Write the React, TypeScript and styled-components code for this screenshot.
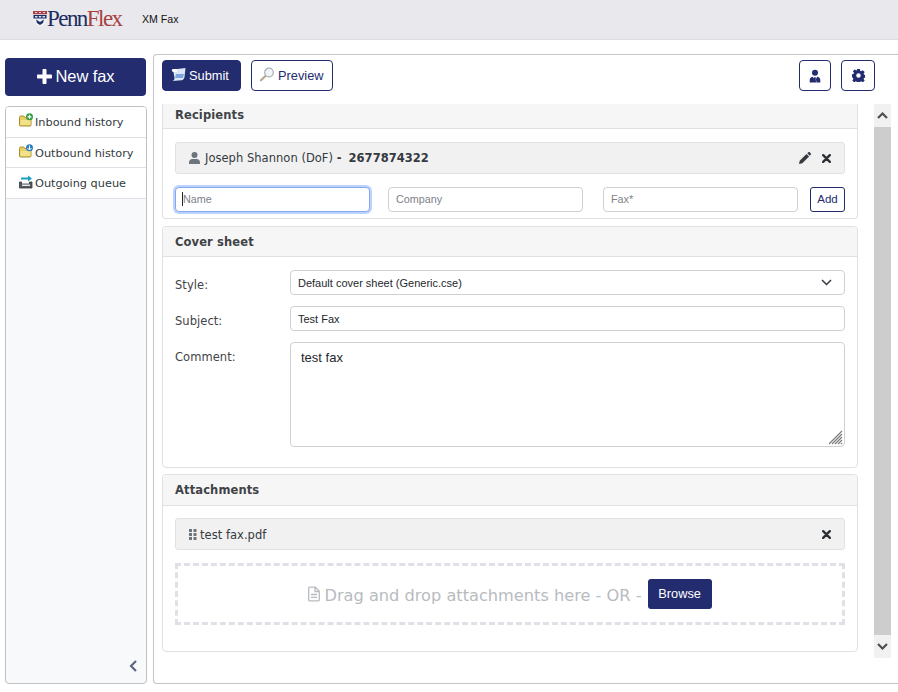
import React from "react";
import styled, { createGlobalStyle } from "styled-components";

const NAVY = "#232c6f";
const Global = createGlobalStyle`
  html, body { margin: 0; padding: 0; background: #fff; }
  #root { width: 898px; height: 692px; overflow: hidden; }
  * { box-sizing: border-box; }
`;
const Page = styled.div`
  width: 898px; height: 692px; display: flex; flex-direction: column;
  font-family: "DejaVu Sans", Verdana, sans-serif; color: #343a40; background: #fff;
`;
const Header = styled.header`
  height: 40px; flex: none; background: #e9e9ed; border-bottom: 1px solid #dedee2;
  display: flex; align-items: center; padding: 0 0 1px 33px;
`;
const Logo = styled.div`
  display: flex; align-items: center; width: 109px;
  font-family: "Liberation Serif", serif; font-size: 23px; letter-spacing: -1.55px; line-height: 22px;
`;
const Penn = styled.span`color: #1d2d63;`;
const Flex = styled.span`color: #a8413f;`;
const AppName = styled.div`
  font-family: "Liberation Sans", Arial, sans-serif; font-size: 10.6px; color: #111; margin-top: -1px;
`;
const Body = styled.div`
  flex: 1; display: grid; grid-template-columns: 142px 745px; column-gap: 6px;
  padding: 14px 0 8px 5px; min-height: 0; width: 898px;
`;
const Side = styled.aside`
  display: flex; flex-direction: column; padding-top: 4px; min-height: 0;
`;
const NewFax = styled.button`
  height: 38px; flex: none; width: 141px; border: none; border-radius: 4px; background: ${NAVY}; color: #fff;
  font-family: "Liberation Sans", Arial, sans-serif; font-size: 16.5px; letter-spacing: -.1px;
  display: flex; align-items: center; justify-content: center; gap: 4px; padding: 0 0 2px;
`;
const SideBox = styled.nav`
  flex: 1; margin-top: 10px; background: #f8f9fb; border: 1px solid #bfc1c4; border-radius: 4px;
  display: flex; flex-direction: column; position: relative;
`;
const SideItem = styled.div<{ $h: number }>`
  height: ${p => p.$h}px; flex: none; background: #fff; border-bottom: 1px solid #dee2e6; display: flex; align-items: center;
  padding: 1px 0 0 13px; gap: 2px; font-size: 11.3px; color: #343a40; border-radius: 3px 3px 0 0;
`;
const Collapse = styled.div`
  position: absolute; right: 8px; bottom: 11px; width: 10px; height: 14px; color: #5a6a7e;
`;
const Main = styled.main`
  border: 1px solid #c3c5c8; border-right: none; border-radius: 4px 0 0 4px; display: flex; flex-direction: column; min-height: 0;
`;
const Toolbar = styled.div`
  height: 49px; flex: none; display: flex; align-items: flex-start; padding: 5px 23px 0 8px;
`;
const Btn = styled.button<{ $solid?: boolean }>`
  height: 31px; border-radius: 4px; border: 1px solid ${NAVY}; background: ${p => (p.$solid ? NAVY : "#fff")};
  color: ${p => (p.$solid ? "#fff" : NAVY)}; font-family: "Liberation Sans", Arial, sans-serif; font-size: 12.8px;
  display: flex; align-items: center; padding: 0 0 0 8px; gap: 2px; width: 79px;
`;
const PreviewBtn = styled(Btn)`margin-left: 10px; width: 82px; gap: 3px;`;
const IconBtn = styled.button<{ $first?: boolean }>`
  height: 31px; width: ${p => (p.$first ? "32px" : "34px")}; margin-left: ${p => (p.$first ? "auto" : "10px")};
  border-radius: 4px; border: 1px solid ${NAVY}; background: #fff; color: ${NAVY};
  display: flex; align-items: center; justify-content: center; padding: 0;
`;
const Work = styled.div`
  flex: 1; display: grid; grid-template-columns: 696px 17px; column-gap: 16px; padding-left: 8px; min-height: 0; padding-bottom: 25px;
`;
const Cards = styled.div`
  display: flex; flex-direction: column;
`;
const Card = styled.section<{ $cut?: boolean; $h: number; $after: number }>`
  height: ${p => p.$h}px; flex: none; margin-bottom: ${p => p.$after}px; border: 1px solid #dfe1e4; border-top: ${p => (p.$cut ? "none" : "1px solid #dfe1e4")};
  border-radius: ${p => (p.$cut ? "0 0 4px 4px" : "4px")}; display: flex; flex-direction: column; overflow: hidden;
`;
const CardHead = styled.h2<{ $h: number; $pb: number }>`
  height: ${p => p.$h}px; flex: none; margin: 0; background: #f6f6f6; border-bottom: 1px solid #dfe1e4;
  font-size: 11.5px; font-weight: 700; color: #3f4347; display: flex; align-items: center; padding: 0 12px ${p => p.$pb}px;
  letter-spacing: .12px;
`;
const CardBody = styled.div<{ $pt: number }>`
  flex: 1; padding: ${p => p.$pt}px 12px 0; display: flex; flex-direction: column;
`;
const Chip = styled.div`
  height: 32px; flex: none; background: #f1f1f2; border: 1px solid #e0e1e6; border-radius: 3px; display: flex; align-items: center;
  padding: 0 13px; font-size: 11.5px; color: #343a40; letter-spacing: .03px;
`;
const ChipName = styled.span<{ $pt?: number }>`padding-top: ${p => p.$pt ?? 0}px;`;
const Number = styled.b`font-weight: 700; margin-left: 3px;`;
const ChipIcons = styled.div`margin-left: auto; display: flex; align-items: center; gap: 11px;`;
const InputRow = styled.div`
  display: grid; grid-template-columns: 195px 195px 242px; column-gap: 18px; margin-top: 13px; height: 25px;
`;
const FaxGroup = styled.div`
  display: grid; grid-template-columns: 195px 35px; column-gap: 12px; margin-left: 2px;
`;
const Inp = styled.div<{ $focus?: boolean }>`
  height: 25px; background: #fff; border: 1px solid ${p => (p.$focus ? "#86a8f0" : "#ced0d6")}; border-radius: 4px;
  font-family: "Liberation Sans", Arial, sans-serif; font-size: 10.8px; color: #7d8288;
  display: flex; align-items: center; padding: 0 0 1px 7px; position: relative;
  ${p => p.$focus ? "box-shadow: 0 0 0 2px #bcd4fb;" : ""}
`;
const Caret = styled.span`width: 1px; height: 14px; background: #222; margin-left: -1px;`;
const AddBtn = styled.button`
  height: 25px; border: 1px solid ${NAVY}; border-radius: 3px; background: #fff; color: ${NAVY};
  font-family: "Liberation Sans", Arial, sans-serif; font-size: 11.5px; padding: 0 0 1px;
`;
const FormRow = styled.div<{ $h: number }>`
  display: grid; grid-template-columns: 115px 555px; height: ${p => p.$h}px; margin-bottom: 11px;
`;
const Label = styled.label`
  font-size: 11.5px; color: #3f4347; padding-top: 8px; letter-spacing: .05px;
`;
const Field = styled.div`
  height: 100%; border: 1px solid #ced0d6; border-radius: 4px; display: flex; align-items: center;
  font-family: "Liberation Sans", Arial, sans-serif; font-size: 11px; color: #24282c; padding: 0 12px 0 7px; background: #fff;
`;
const Chevron = styled.span`margin-left: auto; display: flex; color: #343a40;`;
const TextArea = styled.div`
  height: 100%; border: 1px solid #ced0d6; border-radius: 4px; font-family: "Liberation Sans", Arial, sans-serif; font-size: 13px;
  color: #24282c; padding: 7px 10px; background: #fff; position: relative;
`;
const Resize = styled.svg`position: absolute; right: 1px; bottom: 1px;`;
const Drop = styled.div`
  height: 62px; flex: none; margin-top: 13px; border: 3px dashed #dfe1e6; display: flex; align-items: center; justify-content: center;
  font-size: 16.2px; color: #b8bbbf;
`;
const DropText = styled.span`margin-left: 4px; padding-top: 3px;`;
const BrowseBtn = styled.button`
  height: 30px; width: 64px; margin-left: 6px; border: none; border-radius: 3px; background: ${NAVY}; color: #fff;
  font-family: "Liberation Sans", Arial, sans-serif; font-size: 12.8px; padding: 0 0 1px;
`;
const Scroll = styled.div`
  display: flex; flex-direction: column; background: #cdcdcd; width: 17px;
`;
const Arrow = styled.div`
  height: 23px; flex: none; background: #f1f1f1; color: #505050; display: flex; align-items: center; justify-content: center;
`;
const Track = styled.div`flex: 1;`;

const Shield = () => (
  <svg width="14" height="16" viewBox="0 0 14 16" style={{ flex: "none" }}>
    <path d="M0 0h14v3.500H0z" fill="#a8414a" />
    <path d="M2 1h2v1H2zM6 1h2v1H6zM10 1h2v1h-2z" fill="#e8cfd2" />
    <path d="M0 3.500h14v5c0 3.600-3.200 5.800-7 7.200-3.800-1.400-7-3.600-7-7.200z" fill="#eef0f5" />
    <path d="M.5 4h13v3.500H.5z" fill="#1d2d63" />
    <path d="M2 5h2.500v1.500H2zM5.800 5h2.500v1.500H5.800zM9.500 5H12v1.500H9.500z" fill="#dfe3ee" />
    <path d="M3 8.500 7 11l4-2.500-1 3.500-3 2-3-2z" fill="#1d2d63" />
  </svg>
);
const Folder = ({ c, up }: { c: string; up?: boolean }) => (
  <svg width="14" height="14" viewBox="0 0 14 14" style={{ flex: "none", marginTop: -5 }}>
    <path d="M.5 4.500V12c0 .6.400 1 1 1h9.500c.6 0 1-.4 1-1V5.500c0-.6-.4-1-1-1H6L4.800 3H1.500c-.6 0-1 .6-1 1.500z" fill="#e8cf62" stroke="#a68f2c" />
    <path d="M1.500 7h10v5h-10z" fill="#f3e08a" />
    <circle cx="10.500" cy="3.800" r="3.500" fill={c} />
    {up ? <path d="M10.500 1.500v4.500M8.500 4l2 2 2-2" stroke="#fff" strokeWidth="1" fill="none" /> : <path d="M10.500 1.800v4M8.500 3.800h4" stroke="#fff" strokeWidth="1.300" />}
  </svg>
);
const Queue = () => (
  <svg width="14" height="14" viewBox="0 0 14 14" style={{ flex: "none", marginTop: -3 }}>
    <path d="M2 2.500h7V.5l4 3-4 3v-2H2z" fill="#1e9fbe" />
    <path d="M.5 7v6h12.500V7h-2.500v2h-8V7z" fill="#555b60" stroke="#33383c" strokeWidth=".8" />
    <path d="M3 9.500h8v1.500H3z" fill="#e6e6e6" />
  </svg>
);
const Scroller = () => (
  <svg width="16" height="15" viewBox="0 0 16 15" style={{ flex: "none", marginTop: -3 }}>
    <path d="M2 2.500 14.500 1l-1 9c-.3 2-1.500 3-3 3.300L1.500 14c1.300-.5 2-1.500 2-3z" fill="#dbe7f7" />
    <path d="M2 2c-1.500 0-1.800 3 .7 3h3L6 2z" fill="#fff" />
    <path d="M5 7h8l-1 4H4z" fill="#7da6dc" />
  </svg>
);
const Magnifier = () => (
  <svg width="15" height="15" viewBox="0 0 15 15" style={{ flex: "none", marginTop: -2 }}>
    <path d="M5.500 9 1 13.200" stroke="#b9a88c" strokeWidth="2.200" strokeLinecap="round" />
    <circle cx="9" cy="5.500" r="4.300" fill="#f2f5f8" stroke="#a9afb5" strokeWidth="1.200" />
  </svg>
);
const UserTie = () => (
  <svg width="12" height="14" viewBox="0 0 14 15" fill="currentColor">
    <circle cx="7" cy="3.800" r="3.500" />
    <path d="M.8 15v-2.500C.8 9.900 2.500 8.300 4.600 8.300l1.300 3-.6 3.700zM13.200 15v-2.500c0-2.600-1.700-4.200-3.800-4.200l-1.300 3 .6 3.700zM6.300 9h1.400l.4 1.200-.3.800.5 4h-3l.5-4-.3-.8z" />
  </svg>
);
const Gear = () => (
  <svg width="13" height="13" viewBox="0 0 24 24" fill="currentColor">
    <path fillRule="evenodd" d="M9.500 0h5l.6 3.400 1.900.8 2.900-2 3.500 3.500-2 2.900.8 1.900 3.400.6v4.800l-3.400.6-.8 1.900 2 2.900-3.500 3.500-2.900-2-1.900.8-.6 3.400h-5l-.6-3.400-1.900-.8-2.900 2-3.500-3.500 2-2.900-.8-1.900L-.6 14.400V9.600l3.400-.6.800-1.900-2-2.900L5.100.7 8 2.700l.9-.4zM12 7.800a4.200 4.200 0 1 0 0 8.400 4.200 4.200 0 0 0 0-8.400z" />
  </svg>
);
const Person = () => (
  <svg width="11" height="12" viewBox="0 0 11 12" fill="#6c757d" style={{ flex: "none", marginRight: 5 }}>
    <circle cx="5.500" cy="3" r="3" />
    <path d="M0 12v-1.500C0 8.500 1.500 7 3.200 7h4.600C9.500 7 11 8.500 11 10.500V12z" />
  </svg>
);
const Pencil = () => (
  <svg width="12" height="12" viewBox="0 0 12 12" fill="#343a40">
    <path d="M0 12l.7-3.300L7.500 2l2.600 2.600L3.300 11.300zM8.300 1.200 9.300.3c.4-.4 1-.4 1.400 0l1 1c.4.4.4 1 0 1.400l-.9 1z" />
  </svg>
);
const Times = () => (
  <svg width="9" height="9" viewBox="0 0 9 9" stroke="#2e3236" strokeWidth="2.400" strokeLinecap="round">
    <path d="M1.200 1.200l6.600 6.600M7.800 1.200 1.200 7.800" />
  </svg>
);
const Grip = () => (
  <svg width="8" height="11" viewBox="0 0 8 11" fill="#6c757d" style={{ flex: "none", marginRight: 3 }}>
    <path d="M0 0h3v3H0zM4.500 0h3v3h-3zM0 4h3v3H0zM4.500 4h3v3h-3zM0 8h3v3H0zM4.500 8h3v3h-3z" />
  </svg>
);
const FileIc = () => (
  <svg width="12" height="16" viewBox="0 0 12 15" fill="none" stroke="#b8bbbf" strokeWidth="1.300" style={{ flex: "none" }}>
    <path d="M.7 1.500c0-.5.3-.8.8-.8h5.800l4 4v8.800c0 .5-.3.800-.8.800h-9c-.5 0-.8-.3-.8-.8zM7 1v4h4M3 8h6M3 10.800h6" />
  </svg>
);
const ChevUp = () => (
  <svg width="11" height="7" viewBox="0 0 11 7" fill="none" stroke="currentColor" strokeWidth="2.200"><path d="M1 6l4.500-4.500L10 6" /></svg>
);
const ChevDown = ({ w = 2.200 }: { w?: number }) => (
  <svg width="11" height="7" viewBox="0 0 11 7" fill="none" stroke="currentColor" strokeWidth={w}><path d="M1 1l4.500 4.500L10 1" /></svg>
);

export default function App() {
  return (
    <Page>
      <Global />
      <Header>
        <Logo><Shield /><Penn>Penn</Penn><Flex>Flex</Flex></Logo>
        <AppName>XM Fax</AppName>
      </Header>
      <Body>
        <Side>
          <NewFax>
            <svg width="15" height="15" viewBox="0 0 15 15" fill="#fff"><path d="M5.500 1c0-.5.4-1 1-1h2c.6 0 1 .5 1 1v4.500H14c.5 0 1 .4 1 1v2c0 .6-.5 1-1 1H9.500V14c0 .5-.4 1-1 1h-2c-.6 0-1-.5-1-1V9.500H1c-.5 0-1-.4-1-1v-2c0-.6.5-1 1-1h4.500z" /></svg>
            New fax
          </NewFax>
          <SideBox>
            <SideItem $h={31}><Folder c="#2f9e44" />Inbound history</SideItem>
            <SideItem $h={30}><Folder c="#2a7fc0" up />Outbound history</SideItem>
            <SideItem $h={31}><Queue />Outgoing queue</SideItem>
            <Collapse>
              <svg width="10" height="14" viewBox="0 0 10 14" fill="none" stroke="currentColor" strokeWidth="2.200"><path d="M8 2 3 7l5 5" /></svg>
            </Collapse>
          </SideBox>
        </Side>
        <Main>
          <Toolbar>
            <Btn $solid><Scroller />Submit</Btn>
            <PreviewBtn><Magnifier />Preview</PreviewBtn>
            <IconBtn $first><UserTie /></IconBtn>
            <IconBtn><Gear /></IconBtn>
          </Toolbar>
          <Work>
            <Cards>
              <Card $cut $h={115} $after={7}>
                <CardHead $h={25} $pb={3}>Recipients</CardHead>
                <CardBody $pt={13}>
                  <Chip>
                    <Person />
                    <ChipName>Joseph Shannon (DoF)&nbsp;<b>-</b></ChipName>
                    <Number>&nbsp;2677874322</Number>
                    <ChipIcons><Pencil /><Times /></ChipIcons>
                  </Chip>
                  <InputRow>
                    <Inp $focus><Caret />Name</Inp>
                    <Inp>Company</Inp>
                    <FaxGroup>
                      <Inp>Fax*</Inp>
                      <AddBtn>Add</AddBtn>
                    </FaxGroup>
                  </InputRow>
                </CardBody>
              </Card>
              <Card $h={242} $after={6}>
                <CardHead $h={30} $pb={0}>Cover sheet</CardHead>
                <CardBody $pt={13}>
                  <FormRow $h={25}>
                    <Label>Style:</Label>
                    <Field>Default cover sheet (Generic.cse)<Chevron><ChevDown w={1.500} /></Chevron></Field>
                  </FormRow>
                  <FormRow $h={25}>
                    <Label>Subject:</Label>
                    <Field>Test Fax</Field>
                  </FormRow>
                  <FormRow $h={105}>
                    <Label>Comment:</Label>
                    <TextArea>
                      test fax
                      <Resize width="15" height="15" viewBox="0 0 15 15" stroke="#777" strokeWidth="1.100">
                        <path d="M1 14 14 1M4 14 14 4M7 14l7-7M10 14l4-4M13 14l1-1" />
                      </Resize>
                    </TextArea>
                  </FormRow>
                </CardBody>
              </Card>
              <Card $h={178} $after={0}>
                <CardHead $h={31} $pb={0}>Attachments</CardHead>
                <CardBody $pt={12}>
                  <Chip>
                    <Grip /><ChipName $pt={2}>test fax.pdf</ChipName>
                    <ChipIcons><Times /></ChipIcons>
                  </Chip>
                  <Drop>
                    <FileIc />
                    <DropText>Drag and drop attachments here - OR -</DropText>
                    <BrowseBtn>Browse</BrowseBtn>
                  </Drop>
                </CardBody>
              </Card>
            </Cards>
            <Scroll>
              <Arrow><ChevUp /></Arrow>
              <Track />
              <Arrow><ChevDown /></Arrow>
            </Scroll>
          </Work>
        </Main>
      </Body>
    </Page>
  );
}
